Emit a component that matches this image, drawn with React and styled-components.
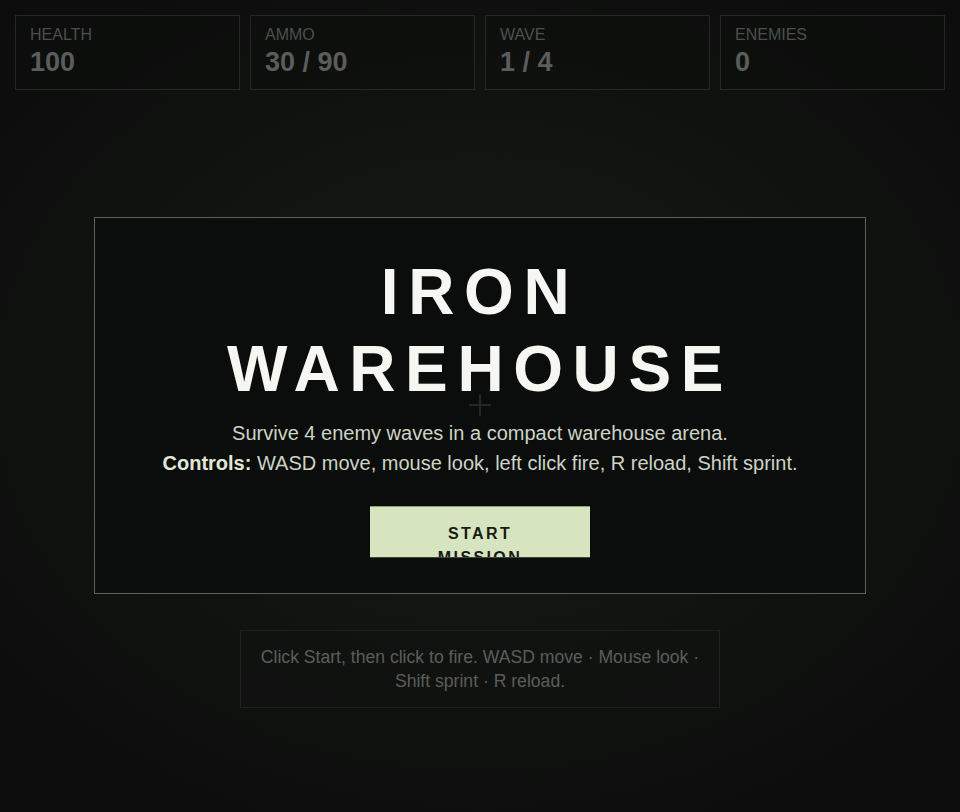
import React from 'react';
import styled, {createGlobalStyle} from 'styled-components';

const GlobalStyle = createGlobalStyle`
  * { box-sizing: border-box; }
  html, body {
    margin: 0;
    padding: 0;
    background: #0b0c0b;
    font-family: "Liberation Sans", Arial, sans-serif;
  }
`;

const stats = [
    {label: 'Health', value: '100'},
    {label: 'Ammo', value: '30 / 90'},
    {label: 'Wave', value: '1 / 4'},
    {label: 'Enemies', value: '0'},
];

function App() {
    return (
        <Page>
            <GlobalStyle/>
            <Hud>
                {stats.map(s => (
                    <StatCard key={s.label}>
                        <StatLabel>{s.label}</StatLabel>
                        <StatValue>{s.value}</StatValue>
                    </StatCard>
                ))}
            </Hud>

            <Stage/>

            <Hint>
                Click Start, then click to fire. WASD move · Mouse look · Shift sprint · R reload.
            </Hint>

            <Overlay>
                <Panel>
                    <Title>IRON<br/>WAREHOUSE</Title>
                    <Desc>Survive 4 enemy waves in a compact warehouse arena.</Desc>
                    <Desc><strong>Controls:</strong> WASD move, mouse look, left click fire, R reload, Shift sprint.</Desc>
                    <StartButton>Start Mission</StartButton>
                </Panel>
            </Overlay>

            <Crosshair width="24" height="24" viewBox="0 0 24 24">
                <path d="M12 1v22M1 12h22" stroke="#343a34" strokeWidth="1.5"/>
            </Crosshair>
        </Page>
    );
}

const Page = styled.div`
  position: relative;
  min-height: 100vh;
  display: flex;
  flex-direction: column;
  background: radial-gradient(ellipse 70% 65% at 50% 48%, #161916 0%, #121412 45%, #0b0c0b 100%);
  overflow: hidden;
`;

const Hud = styled.div`
  display: grid;
  grid-template-columns: repeat(4, 1fr);
  gap: 10px;
  padding: 15px;
`;

const StatCard = styled.div`
  height: 75px;
  padding: 9px 14px;
  border: 1px solid #242924;
  background: rgba(12, 14, 12, 0.55);
`;

const StatLabel = styled.div`
  font-size: 16px;
  line-height: 19px;
  text-transform: uppercase;
  color: #4c4f4c;
`;

const StatValue = styled.div`
  margin-top: 2px;
  font-size: 27px;
  line-height: 32px;
  font-weight: 700;
  color: #5b5d5b;
`;

const Stage = styled.div`
  flex: 1;
`;

const Hint = styled.div`
  width: 480px;
  margin: 0 auto 104px;
  padding: 14px 12px;
  border: 1px solid #1d221d;
  background: rgba(16, 19, 16, 0.6);
  font-size: 17.6px;
  line-height: 24px;
  text-align: center;
  color: #5a5e5a;
`;

const Overlay = styled.div`
  position: absolute;
  inset: 0 0 1px;
  display: flex;
  align-items: center;
  justify-content: center;
`;

const Panel = styled.div`
  width: 772px;
  height: 377px;
  padding: 36px 24px;
  border: 1px solid #596256;
  background: #0a0d0b;
  text-align: center;
`;

const Title = styled.h1`
  margin: 0 0 10px;
  font-size: 64px;
  line-height: 1.2;
  font-weight: 700;
  letter-spacing: 0.15em;
  color: #f6f6f2;
`;

const Desc = styled.p`
  margin: 0;
  font-size: 20px;
  line-height: 30px;
  color: #cdd3c5;

  strong {
    color: #e2e8d8;
  }
`;

const StartButton = styled.button`
  display: block;
  width: 220px;
  height: 52px;
  margin: 28px auto 0;
  padding: 15px 40px;
  overflow: hidden;
  border: none;
  border-top: 1px solid #8f9c80;
  border-bottom: 1px solid #3d4536;
  background: #d7e4c0;
  font-family: inherit;
  font-size: 16px;
  line-height: 24px;
  font-weight: 700;
  letter-spacing: 0.15em;
  text-transform: uppercase;
  color: #171a15;
`;

const Crosshair = styled.svg`
  position: absolute;
  left: 468px;
  top: 393px;
  opacity: 0.8;
`;

export default App;
